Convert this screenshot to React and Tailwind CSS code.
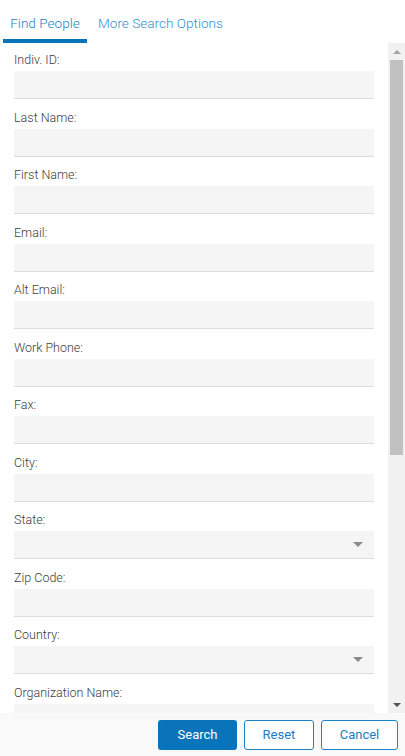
import React from 'react';

const fields = [
  { label: 'Indiv. ID:' },
  { label: 'Last Name:' },
  { label: 'First Name:' },
  { label: 'Email:' },
  { label: 'Alt Email:' },
  { label: 'Work Phone:' },
  { label: 'Fax:' },
  { label: 'City:' },
  { label: 'State:', select: true },
  { label: 'Zip Code:' },
  { label: 'Country:', select: true },
  { label: 'Organization Name:' },
];

const Field = ({ label, select }) => (
  <div className="flex flex-col">
    <label className="h-[18px] leading-[19px] text-[12.5px] font-light text-[#3d3d3d]">{label}</label>
    <div className="mt-[3px] h-[28px] bg-[#f5f5f5] border-b border-[#dcdcdc] flex items-center justify-end pr-[11px]">
      {select && (
        <span className="w-0 h-0 border-l-[5px] border-r-[5px] border-t-[5px] border-l-transparent border-r-transparent border-t-[#8a8a8a]" />
      )}
    </div>
  </div>
);

export default function App() {
  return (
    <div className="w-[405px] h-[756px] bg-white flex flex-col overflow-hidden font-['Roboto',_'Liberation_Sans',_sans-serif]">
      {/* Tabs */}
      <div className="h-[43px] flex items-end pl-[3px] shrink-0">
        <button className="w-[84px] h-[43px] pt-[7px] text-[13.6px] font-light text-[#1b84c7] border-b-[4px] border-[#0a74bb]">
          Find People
        </button>
        <button className="h-[43px] px-[11px] pt-[7px] text-[13.6px] font-light text-[#2f93d3] border-b-[4px] border-transparent">
          More Search Options
        </button>
      </div>

      {/* Scroll area */}
      <div className="flex-1 flex min-h-0">
        <div className="flex-1 overflow-hidden px-[14px] pt-[7px]">
          <div className="flex flex-col gap-[8.5px]">
            {fields.map((f) => (
              <Field key={f.label} {...f} />
            ))}
          </div>
        </div>
        <div className="w-[17px] bg-[#f1f1f1] flex flex-col items-center">
          <div className="h-[17px] flex items-center justify-center">
            <span className="w-0 h-0 border-l-[4px] border-r-[4px] border-b-[4px] border-l-transparent border-r-transparent border-b-[#a3a3a3]" />
          </div>
          <div className="w-[13px] h-[395px] bg-[#c1c1c1]" />
          <div className="flex-1" />
          <div className="h-[17px] flex items-center justify-center">
            <span className="w-0 h-0 border-l-[4px] border-r-[4px] border-t-[4px] border-l-transparent border-r-transparent border-t-[#505050]" />
          </div>
        </div>
      </div>

      {/* Footer */}
      <div className="h-[43px] shrink-0 bg-[#f9f9f9] flex items-center justify-end gap-[7px] pr-[7px]">
        <button className="w-[79px] h-[30px] rounded-[3px] bg-[#0a74bb] text-white text-[13px]">Search</button>
        <button className="w-[70px] h-[30px] rounded-[3px] border border-[#1b84c7] bg-white text-[#1b7bc0] text-[13px]">Reset</button>
        <button className="w-[77px] h-[30px] rounded-[3px] border border-[#1b84c7] bg-white text-[#1b7bc0] text-[13px]">Cancel</button>
      </div>
    </div>
  );
}
